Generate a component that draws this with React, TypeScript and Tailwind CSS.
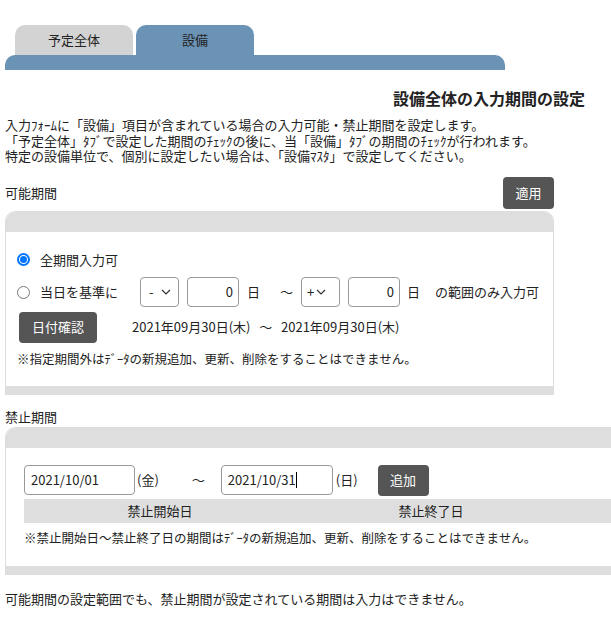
const Chev = () => (
  <svg width="10" height="6" viewBox="0 0 10 6" fill="none" stroke="#333" strokeWidth="1.2"><path d="M1 1l4 4 4-4" /></svg>
);
export default function App() {
  const f = { fontFamily: '"Noto Sans CJK JP", "Noto Sans", sans-serif' };
  return (
    <div style={f} className="w-[611px] h-[632px] overflow-hidden bg-white text-[13px] leading-[16px] text-[#222] whitespace-nowrap">
      <div className="pt-[25px] flex pl-[15px] gap-[3px]">
        <div className="w-[118px] h-[30px] bg-[#d3d3d3] rounded-t-[10px] flex items-center justify-center">予定全体</div>
        <div className="w-[118px] h-[30px] bg-[#6b93b5] rounded-t-[10px] flex items-center justify-center">設備</div>
      </div>
      <div className="ml-[5px] w-[500px] h-[15px] bg-[#6b93b5] rounded-t-[10px]" />
      <div className="mt-[18px] pr-[26px] text-right font-bold text-[16px] leading-[20px]">設備全体の入力期間の設定</div>
      <div className="mt-[9px] pl-[5px] leading-[15.5px]">
        <div>入力ﾌｫｰﾑに「設備」項目が含まれている場合の入力可能・禁止期間を設定します。</div>
        <div>「予定全体」ﾀﾌﾞで設定した期間のﾁｪｯｸの後に、当「設備」ﾀﾌﾞの期間のﾁｪｯｸが行われます。</div>
        <div>特定の設備単位で、個別に設定したい場合は、「設備ﾏｽﾀ」で設定してください。</div>
      </div>
      <div className="mt-[13px] w-[554px] flex items-center justify-between pl-[5px]">
        <span>可能期間</span>
        <button className="w-[51px] h-[32px] rounded-[4px] bg-[#555] text-white">適用</button>
      </div>
      <div className="mt-[2px] ml-[5px] w-[549px] rounded-t-[10px] border border-[#ddd] overflow-hidden">
        <div className="h-[20px] bg-[#dedede]" />
        <div className="px-[11px] pt-[18px] pb-[19px]">
          <label className="flex items-center gap-[10px] h-[20px]">
            <span className="w-[13px] h-[13px] rounded-full border-2 border-[#0075ff] flex items-center justify-center"><span className="w-[7px] h-[7px] rounded-full bg-[#0075ff]" /></span>
            全期間入力可
          </label>
          <div className="flex items-center mt-[7px] h-[31px]">
            <span className="w-[13px] h-[13px] rounded-full border border-[#777]" />
            <span className="ml-[10px] w-[100px]">当日を基準に</span>
            <div className="w-[39px] h-[30px] border border-[#999] rounded-[4px] flex items-center pl-[8px] gap-[7px]">-<Chev /></div>
            <div className="ml-[8px] w-[52px] h-[30px] border border-[#999] rounded-[4px] flex items-center justify-end pr-[5px]">0</div>
            <span className="ml-[8px]">日</span>
            <span className="ml-[20px]">～</span>
            <div className="ml-[8px] w-[39px] h-[30px] border border-[#999] rounded-[4px] flex items-center pl-[5px] gap-[2px]">+<Chev /></div>
            <div className="ml-[8px] w-[52px] h-[30px] border border-[#999] rounded-[4px] flex items-center justify-end pr-[5px]">0</div>
            <span className="ml-[7px]">日</span>
            <span className="ml-[15px]">の範囲のみ入力可</span>
          </div>
          <div className="flex items-center mt-[4px]">
            <button className="ml-[2px] w-[78px] h-[31px] rounded-[4px] bg-[#555] text-white">日付確認</button>
            <span className="ml-[35px]">2021年09月30日(木)&nbsp;&nbsp;&nbsp;～&nbsp;&nbsp;&nbsp;2021年09月30日(木)</span>
          </div>
          <div className="mt-[8px] text-[12.5px]">※指定期間外はﾃﾞｰﾀの新規追加、更新、削除をすることはできません。</div>
        </div>
        <div className="h-[8px] bg-[#dedede]" />
      </div>
      <div className="mt-[14px] pl-[5px]">禁止期間</div>
      <div className="mt-[2px] ml-[5px] w-[620px] rounded-tl-[10px] border border-[#ddd] overflow-hidden">
        <div className="h-[20px] bg-[#dedede]" />
        <div className="pl-[18px] pt-[17px] pb-[20px]">
          <div className="flex items-center h-[31px]">
            <div className="w-[111px] h-[30px] border border-[#999] rounded-[4px] flex items-center pl-[6px]">2021/10/01</div>
            <span className="ml-[2px]">(金)</span>
            <span className="ml-[33px]">～</span>
            <div className="ml-[16px] w-[112px] h-[30px] border border-[#999] rounded-[4px] flex items-center pl-[6px]">2021/10/31<span className="w-px h-[16px] bg-black" /></div>
            <span className="ml-[3px]">(日)</span>
            <button className="ml-[20px] w-[51px] h-[31px] rounded-[4px] bg-[#555] text-white">追加</button>
          </div>
          <div className="mt-[3px] h-[24px] bg-[#dedede] flex items-center">
            <span className="w-[272px] text-center">禁止開始日</span>
            <span className="w-[270px] text-center">禁止終了日</span>
          </div>
          <div className="mt-[7px] text-[12.5px]">※禁止開始日～禁止終了日の期間はﾃﾞｰﾀの新規追加、更新、削除をすることはできません。</div>
        </div>
        <div className="h-[8px] bg-[#dedede]" />
      </div>
      <div className="mt-[16px] pl-[5px]">可能期間の設定範囲でも、禁止期間が設定されている期間は入力はできません。</div>
    </div>
  );
}
